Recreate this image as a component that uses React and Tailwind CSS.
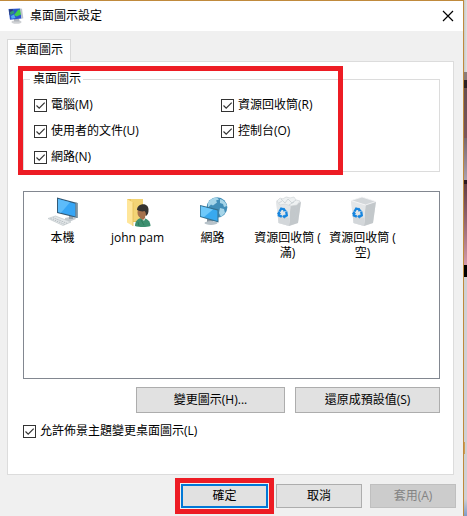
import React from "react";

function TitleIcon() {
  return (
    <svg className="h-4 w-4" viewBox="0 0 16 16" aria-hidden="true">
      <ellipse cx="8.500" cy="14" rx="5" ry="1.800" fill="#cfd1d4" />
      <path d="M6 10.500h5l.6 3H6z" fill="#b3b7bd" />
      <path d="M.5 1 12 .5l1.500 10L2 11.800z" fill="#2b55cc" />
      <path d="M1 1.500l4-.5-1 4-2.500 2z" fill="#2a3f78" />
      <path d="M2 4l3.500-1.500 1 2.500-4 2z" fill="#2f9a7a" />
      <path d="M6 7l4-5 2.500-.8.6 5.300-4.600 2z" fill="#3fce4c" />
      <path d="M3 8l3-1.500L7.500 10l-4 .8z" fill="#52a8f2" />
      <path d="M12 .5l2 .2 1.300 9.600-1.800.4z" fill="#bcc1cc" />
    </svg>
  );
}

function ComputerIcon() {
  return (
    <svg className="h-8 w-8" viewBox="0 0 32 32" aria-hidden="true">
      <path d="M18 22l9-2 2 3-6 2.500-5-1.500z" fill="#c5cbd0" />
      <path d="M22 18h4v5h-4z" fill="#9aa5ad" />
      <path d="M10 1.500 30.500 7v15L10 17z" fill="#345a76" />
      <path d="M11 3 28.500 7.800v12.700L11 16z" fill="#36a5f5" />
      <path d="M11 3l12 3.300L14 16.800l-3-.8z" fill="#5dbcfa" />
      <path d="M28.500 6.500l2 .5v15l-2-.5z" fill="#7c929f" />
      <path d="M1 22.500 8.500 20 24 26l-8 3.500z" fill="#e2e6e8" stroke="#b9c1c5" strokeWidth=".6" />
      <path d="M3.500 22.500l14.500 6M6 21.700l14.500 5.800" stroke="#a9b2b7" strokeWidth=".8" strokeDasharray="1.500 .8" />
    </svg>
  );
}

function UserFolderIcon() {
  return (
    <svg className="h-8 w-8" viewBox="0 0 32 32" aria-hidden="true">
      <path d="M5 3h16v23H5z" fill="#eac55c" />
      <path d="M9 3h12v22H9z" fill="#f3d475" />
      <path d="M5 3l6 3.500V30l-6-3.500z" fill="#ffe69a" />
      <path d="M11 6.500V30" stroke="#e1b94f" strokeWidth=".7" />
      <path d="M13 30c0-5 3-8 7-8 5 0 8.500 3 8.500 8-4 1.300-11 1.300-15.500 0z" fill="#3c8f70" />
      <path d="M18 21l4 4 2-4z" fill="#edf0eb" />
      <path d="M18 18h5v4l-2 2-3-2z" fill="#a56d48" />
      <ellipse cx="20" cy="16.500" rx="4.500" ry="5.700" fill="#a5714c" />
      <path d="M15 14c0-7 11-8 11.500-1 .3 4-1 6-2.500 7 0-3-.5-4-1.500-5-2 1-5 0-7.500-1z" fill="#353331" />
      <path d="M19 24l3 5M16 26l1 4" stroke="#2c7657" strokeWidth=".8" />
    </svg>
  );
}

function NetworkIcon() {
  return (
    <svg className="h-8 w-8" viewBox="0 0 32 32" aria-hidden="true">
      <circle cx="20" cy="11.500" r="10.300" fill="#428eb8" />
      <path d="M11 7c2-4 6-5.500 9-5.500l2 2-3 1 1 2-4 3-2-1-3 3zM23 3c4 1 6 4 7 7l-3 1-1-3-3-1zM23 12l4 1 1 4-4 4-2-4z" fill="#a6d5e9" />
      <path d="M10 23h6v4h-6z" fill="#88949d" />
      <ellipse cx="14" cy="27" rx="6.500" ry="1.900" fill="#b7c2c9" />
      <path d="M3 9l18.500 4.500v13L3 21z" fill="#36718f" />
      <path d="M3.800 10.300 20.500 14.400v10.700L3.800 20.300z" fill="#38a9ef" />
      <path d="M3.800 10.300 16 13.400 7 20.900 3.800 20z" fill="#6fc9fa" />
    </svg>
  );
}

function RecycleIcon({ full }) {
  return (
    <svg className="h-8 w-8" viewBox="0 0 32 32" aria-hidden="true">
      <path d="M4 4.500 15 1l14 4.500L26 27l-9 3-10.500-3z" fill="#e5e8ea" />
      <path d="M4 4.500 15 1l14 4.500L18.500 9z" fill={full ? "#f3f5f6" : "#d3d7da"} />
      <path d="M18.500 9 29 5.500 26 27l-9 3z" fill="#c3c8cb" />
      <path d="M4 4.500 18.500 9 17 30 6.500 27z" fill="#e3e6e8" />
      <path d="M5.800 19l11.700 3L17 30 6.500 27z" fill="#d3d7da" />
      <path d="M4 4.500 15 1l14 4.500L18.500 9z" stroke="#f7f8f9" strokeWidth=".8" fill="none" />
      {full && (
        <g>
          <path d="M5 5l3-3 3 1 3-2 4 1 4-1 2 3 4 1-3 4-6 1-6-2-5 1z" fill="#eef1f2" stroke="#ccd2d5" strokeWidth=".6" />
          <path d="M9 3l4 4 3-4 4 4 4-3M7 7l3-2M17 9l5-3M20 13l5-2-2 5 2 3-4 4" stroke="#c3cace" strokeWidth=".7" fill="none" />
        </g>
      )}
      <g fill="none" stroke="#1685df" strokeWidth="2.300">
        <path d="M7.500 15.500 9.200 12.500 12.500 13.500" />
        <path d="M14.200 15.500 14.800 19.300 12 21" />
        <path d="M9.800 20.600 6.800 19.400 6.800 17" />
      </g>
      <path d="M11.800 11.600l3 3.500-3.700.4zM12.600 18.500v4.300l-2.500-2.600zM5 17.800l2-3 2.200 3.500z" fill="#1685df" />
    </svg>
  );
}

function Check({ label }) {
  return (
    <label className="flex h-4 items-center gap-1 whitespace-nowrap">
      <span className="relative flex h-[13px] w-[13px] shrink-0">
        <input
          type="checkbox"
          defaultChecked
          className="peer h-[13px] w-[13px] appearance-none border border-[#333333] bg-white"
        />
        <svg
          className="pointer-events-none absolute inset-0 hidden h-[13px] w-[13px] peer-checked:block"
          viewBox="0 0 13 13"
          aria-hidden="true"
        >
          <path d="M2.500 6.500 5.200 9.200 10.700 3.700" fill="none" stroke="#333" strokeWidth="1.200" />
        </svg>
      </span>
      <span>{label}</span>
    </label>
  );
}

const items = [
  { name: "本機", icon: <ComputerIcon /> },
  { name: "john pam", icon: <UserFolderIcon /> },
  { name: "網路", icon: <NetworkIcon /> },
  { name: "資源回收筒 (\n滿)", icon: <RecycleIcon full /> },
  { name: "資源回收筒 (\n空)", icon: <RecycleIcon /> },
];

const button = "border border-[#adadad] bg-[#e1e1e1] text-center";

export default function App() {
  return (
    <div className="flex min-h-screen bg-[#f0f0f0] font-['Open_Sans','Noto_Sans_CJK_TC',sans-serif] text-[12px] leading-4 text-black">
      <main className="min-w-0 flex-1 border-t border-r border-[#c08a3c]">
        <header className="flex h-[30px] items-center bg-white pr-[7px] pl-2">
          <TitleIcon />
          <h1 className="ml-1.5 flex-1">桌面圖示設定</h1>
          <button type="button" aria-label="關閉" className="p-0.5">
            <svg className="h-3 w-3" viewBox="0 0 12 12" aria-hidden="true">
              <path d="M1 1l10 10M11 1 1 11" stroke="#000" strokeWidth="1.200" />
            </svg>
          </button>
        </header>

        <div className="pt-2 pr-[9px] pl-[7px]">
          <div role="tablist" className="flex">
            <button
              type="button"
              role="tab"
              aria-selected="true"
              className="z-10 -mb-px h-[23px] border border-b-0 border-[#d9d9d9] bg-white px-[7px] pb-[3px]"
            >
              桌面圖示
            </button>
          </div>

          <section className="border border-[#dcdcdc] bg-white pt-[9px] pr-[13px] pb-[35px] pl-[15px]">
            <div className="relative">
              <fieldset className="h-[101px] border border-[#dcdcdc] px-2.5 pt-2.5">
                <legend className="-ml-1 pr-0.5 pl-[3px]">桌面圖示</legend>
                <div className="grid grid-cols-[187px_1fr] gap-y-2.5">
                  <Check label="電腦(M)" />
                  <Check label="資源回收筒(R)" />
                  <Check label="使用者的文件(U)" />
                  <Check label="控制台(O)" />
                  <Check label="網路(N)" />
                </div>
              </fieldset>
              <div className="pointer-events-none absolute -top-[5px] -left-[5px] h-[109px] w-[325px] border-5 border-[#ed1c24]" />
            </div>

            <ul className="mt-[19px] flex h-[188px] border border-[#828790] pt-1 pl-px">
              {items.map((item) => (
                <li key={item.name} className="flex w-[75px] flex-col items-center gap-0.5">
                  {item.icon}
                  <span className="text-center leading-[15px] whitespace-pre">{item.name}</span>
                </li>
              ))}
            </ul>

            <div className="mt-2 flex h-[26px] justify-end gap-2.5">
              <button type="button" className={`${button} w-[149px]`}>
                變更圖示(H)...
              </button>
              <button type="button" className={`${button} w-[145px]`}>
                還原成預設值(S)
              </button>
            </div>

            <div className="mt-2.5">
              <Check label="允許佈景主題變更桌面圖示(L)" />
            </div>
          </section>
        </div>

        <footer className="mt-[9px] flex h-6 justify-end gap-2 pr-[7px]">
          <div className="relative">
            <button type="button" className="h-6 w-[87px] border-2 border-[#0078d7] bg-[#e1e1e1]">
              確定
            </button>
            <div className="pointer-events-none absolute -inset-1.5 border-5 border-[#ed1c24]" />
          </div>
          <button type="button" className={`${button} w-[86px]`}>
            取消
          </button>
          <button
            type="button"
            disabled
            className="w-[86px] border border-[#bfbfbf] bg-[#cccccc] text-[#838383]"
          >
            套用(A)
          </button>
        </footer>
      </main>

      <aside className="flex w-[3px] flex-col bg-[#d0d0d4]" aria-hidden="true">
        <div className="h-[72px] bg-linear-to-r from-[#c8c8c8] to-[#e2e2e2]" />
        <div className="h-2 bg-[#8b7d7b]" />
        <div className="h-2 bg-[#2a2024]" />
        <div className="h-[50px] bg-linear-to-b from-[#664e50] to-[#7b565b]" />
        <div className="h-[42px] bg-linear-to-b from-[#79686f] to-[#aaa0b0]" />
        <div className="h-1 bg-[#2b1a22]" />
        <div className="h-[81px] bg-linear-to-b from-[#633f46] to-[#d49aaa]" />
        <div className="h-3 bg-black" />
        <div className="h-[165px]" />
        <div className="flex h-3">
          <div className="w-px bg-[#cf9d55]" />
        </div>
        <div className="h-[45px]" />
        <div className="flex-1 bg-linear-to-b from-[#d0d0d4] to-[#809cc8]" />
      </aside>
    </div>
  );
}
